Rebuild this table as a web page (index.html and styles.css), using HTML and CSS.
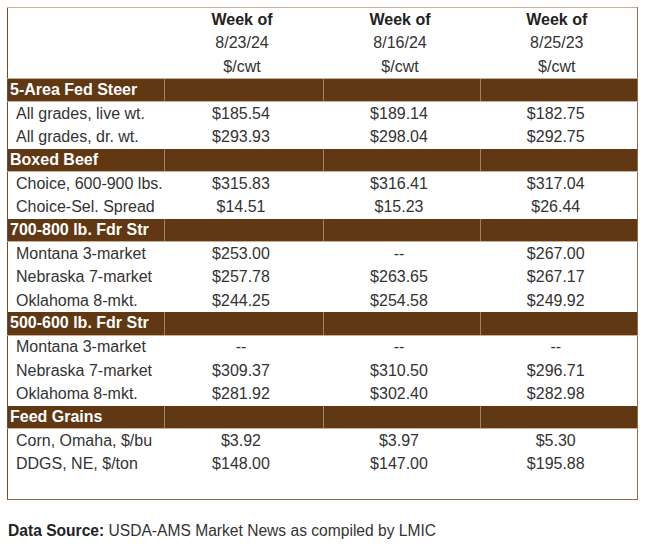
FILE: index.html
```html
<!DOCTYPE html>
<html>
<head>
<meta charset="utf-8">
<link rel="stylesheet" href="styles.css">
</head>
<body>
<div class="page">
<table class="prices">
  <colgroup>
    <col class="c1"><col class="c2"><col class="c3"><col class="c4">
  </colgroup>
  <thead>
    <tr class="head">
      <th></th>
      <th><span class="wk">Week of</span><br>8/23/24<br>$/cwt</th>
      <th><span class="wk">Week of</span><br>8/16/24<br>$/cwt</th>
      <th><span class="wk">Week of</span><br>8/25/23<br>$/cwt</th>
    </tr>
  </thead>
  <tbody>
    <tr class="sec"><td>5-Area Fed Steer</td><td></td><td></td><td></td></tr>
    <tr class="row"><td>All grades, live wt.</td><td>$185.54</td><td>$189.14</td><td>$182.75</td></tr>
    <tr class="row"><td>All grades, dr. wt.</td><td>$293.93</td><td>$298.04</td><td>$292.75</td></tr>
    <tr class="sec"><td>Boxed Beef</td><td></td><td></td><td></td></tr>
    <tr class="row"><td>Choice, 600-900 lbs.</td><td>$315.83</td><td>$316.41</td><td>$317.04</td></tr>
    <tr class="row"><td>Choice-Sel. Spread</td><td>$14.51</td><td>$15.23</td><td>$26.44</td></tr>
    <tr class="sec"><td>700-800 lb. Fdr Str</td><td></td><td></td><td></td></tr>
    <tr class="row"><td>Montana 3-market</td><td>$253.00</td><td>--</td><td>$267.00</td></tr>
    <tr class="row"><td>Nebraska 7-market</td><td>$257.78</td><td>$263.65</td><td>$267.17</td></tr>
    <tr class="row"><td>Oklahoma 8-mkt.</td><td>$244.25</td><td>$254.58</td><td>$249.92</td></tr>
    <tr class="sec"><td>500-600 lb. Fdr Str</td><td></td><td></td><td></td></tr>
    <tr class="row"><td>Montana 3-market</td><td>--</td><td>--</td><td>--</td></tr>
    <tr class="row"><td>Nebraska 7-market</td><td>$309.37</td><td>$310.50</td><td>$296.71</td></tr>
    <tr class="row"><td>Oklahoma 8-mkt.</td><td>$281.92</td><td>$302.40</td><td>$282.98</td></tr>
    <tr class="sec"><td>Feed Grains</td><td></td><td></td><td></td></tr>
    <tr class="row"><td>Corn, Omaha, $/bu</td><td>$3.92</td><td>$3.97</td><td>$5.30</td></tr>
    <tr class="row"><td>DDGS, NE, $/ton</td><td>$148.00</td><td>$147.00</td><td>$195.88</td></tr>
    <tr class="row empty"><td></td><td></td><td></td><td></td></tr>
  </tbody>
</table>
<p class="source"><strong>Data Source:</strong> USDA-AMS Market News as compiled by LMIC</p>
</div>
</body>
</html>
```

FILE: styles.css
```css
html, body {
  margin: 0;
  padding: 0;
  background: #ffffff;
}

.page {
  padding: 7px 0 0 7px;
  font-family: "Liberation Sans", Arial, sans-serif;
  font-size: 16px;
  color: #333333;
}

.prices {
  border-collapse: collapse;
  table-layout: fixed;
  width: 631px;
  border-top: 1px solid #c9b29c;
  border-left: 1px solid #6e4d30;
  border-right: 1px solid #8a6a50;
  border-bottom: 1px solid #8a6a50;
}

.c1 { width: 157px; }
.c2 { width: 159px; }
.c3 { width: 157px; }
.c4 { width: 157px; }

.prices th,
.prices td {
  padding: 0;
  white-space: nowrap;
}

.head th {
  height: 70px;
  line-height: 23.33px;
  font-weight: normal;
  text-align: center;
  color: #333333;
  padding-right: 4px;
  vertical-align: top;
  border-bottom: 1px solid #c9ad95;
}

.wk {
  font-weight: bold;
  color: #222222;
}

.sec td {
  height: 22.33px;
  background: #603813;
  color: #ffffff;
  font-weight: bold;
  border-left: 1px solid #a08068;
  border-bottom: 1px solid #c9ad95;
  line-height: 22px;
}

.sec td:first-child {
  padding-left: 2px;
  border-left: none;
}

.row td {
  height: 23.33px;
  line-height: 22px;
  text-align: center;
  padding-right: 6px;
}

.row td:first-child {
  text-align: left;
  padding-left: 8px;
  padding-right: 0;
}

.row.empty td {
  height: 23.33px;
}

.source {
  margin: 22px 0 0 1px;
  font-size: 15.6px;
  color: #333333;
}

.source strong {
  color: #222222;
}
```
